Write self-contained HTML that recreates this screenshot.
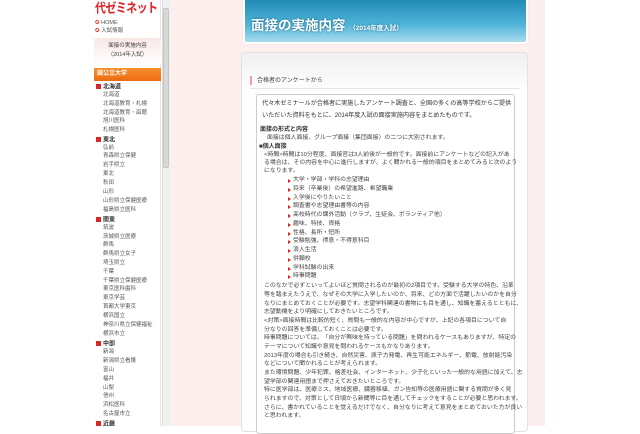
<!DOCTYPE html>
<html><head><meta charset="utf-8"><style>
*{margin:0;padding:0;box-sizing:border-box}
body{width:640px;height:426px;overflow:hidden;background:#fff;position:relative;font-family:"Liberation Sans","Noto Sans CJK JP",sans-serif;color:#333}
.a{position:absolute;white-space:nowrap;line-height:1}
#pink{position:absolute;left:170px;top:0;width:375px;height:426px;background:#fcefee}
#side{position:absolute;left:94px;top:0;width:67px;height:426px;background:#fff;border-right:1px solid #e4e4e4}
#sb{position:absolute;left:162px;top:0;width:8px;height:426px;background:#f0f0f0;border-left:1px solid #ddd}
#thumb{position:absolute;left:163px;top:8px;width:6px;height:160px;background:#d8d8d8;border:1px solid #c4c4c4;border-radius:2px}
.si{font-size:5.5px;color:#555;left:103px}
.sh{font-size:6px;color:#333;font-weight:bold;left:96px}
.sh:before{content:"";display:inline-block;width:5px;height:5px;background:#d8262a;margin-right:2px;vertical-align:-0.5px}
#hdr{position:absolute;left:243px;top:-4px;width:285px;height:48px;border-radius:4px;background:linear-gradient(#1f87b3,#4fb4d8 60%,#a8dcef);border:2px solid #fff;box-shadow:0 0 1px #ccc}
#panel{position:absolute;left:241px;top:52px;width:287px;height:380px;border-radius:4px;background:linear-gradient(#f0f0f0,#fff 40px);border:1px solid #e2e2e2}
#box{position:absolute;left:256px;top:94px;width:259px;height:340px;border-radius:3px;background:#fff;border:1px solid #ccc}
.t{font-size:5.9px;color:#444;left:264px}
.l{font-size:5.9px;color:#444;left:293px}
.l:before{content:"";position:absolute;left:-5px;top:1px;border-left:3px solid #d8262a;border-top:2px solid transparent;border-bottom:2px solid transparent}
</style></head><body>
<div id="pink"></div>
<div id="side"></div>
<div id="sb"></div><div id="thumb"></div>
<div class="a" style="left:95px;top:3px;font-size:11px;font-weight:bold;color:#e0242a;letter-spacing:-0.6px;transform:scaleY(1.2);transform-origin:left top">代ゼミネット</div>
<div class="a" style="left:95px;top:21px;font-size:5.5px;color:#555"><span style="color:#d8262a">✪</span> HOME</div>
<div class="a" style="left:95px;top:29px;font-size:5.5px;color:#555"><span style="color:#d8262a">✪</span> 入試情報</div>
<div class="a" style="left:94px;top:38px;width:67px;height:28px;background:linear-gradient(#f8e8e6,#fff);border-radius:3px"></div>
<div class="a" style="left:94px;top:44px;width:67px;text-align:center;font-size:5.5px;color:#444">面接の実施内容</div>
<div class="a" style="left:94px;top:53px;width:67px;text-align:center;font-size:5.5px;color:#444">（2014年入試）</div>
<div class="a" style="left:94px;top:68px;width:67px;height:13px;background:linear-gradient(#f4902e,#ee6a10);"></div>
<div class="a" style="left:97px;top:71px;font-size:6px;color:#fff;font-weight:bold">国公立大学</div>
<div class="a sh" style="top:84px">北海道</div>
<div class="a si" style="top:93px">北海道</div>
<div class="a si" style="top:102px">北海道教育・札幌</div>
<div class="a si" style="top:111px">北海道教育・函館</div>
<div class="a si" style="top:119px">旭川医科</div>
<div class="a si" style="top:128px">札幌医科</div>
<div class="a sh" style="top:137px">東北</div>
<div class="a si" style="top:146px">弘前</div>
<div class="a si" style="top:154px">青森県立保健</div>
<div class="a si" style="top:163px">岩手県立</div>
<div class="a si" style="top:172px">東北</div>
<div class="a si" style="top:181px">秋田</div>
<div class="a si" style="top:190px">山形</div>
<div class="a si" style="top:199px">山形県立保健医療</div>
<div class="a si" style="top:208px">福島県立医科</div>
<div class="a sh" style="top:217px">関東</div>
<div class="a si" style="top:226px">筑波</div>
<div class="a si" style="top:235px">茨城県立医療</div>
<div class="a si" style="top:243px">群馬</div>
<div class="a si" style="top:252px">群馬県立女子</div>
<div class="a si" style="top:261px">埼玉県立</div>
<div class="a si" style="top:270px">千葉</div>
<div class="a si" style="top:279px">千葉県立保健医療</div>
<div class="a si" style="top:287px">東京医科歯科</div>
<div class="a si" style="top:296px">東京学芸</div>
<div class="a si" style="top:305px">首都大学東京</div>
<div class="a si" style="top:314px">横浜国立</div>
<div class="a si" style="top:323px">神奈川県立保健福祉</div>
<div class="a si" style="top:332px">横浜市立</div>
<div class="a sh" style="top:341px">中部</div>
<div class="a si" style="top:350px">新潟</div>
<div class="a si" style="top:359px">新潟県立看護</div>
<div class="a si" style="top:368px">富山</div>
<div class="a si" style="top:377px">福井</div>
<div class="a si" style="top:386px">山梨</div>
<div class="a si" style="top:394px">信州</div>
<div class="a si" style="top:403px">浜松医科</div>
<div class="a si" style="top:412px">名古屋市立</div>
<div class="a sh" style="top:421px">近畿</div>

<div id="hdr"></div>
<div class="a" style="left:251px;top:19px;font-size:13.5px;font-weight:bold;color:#fff;text-shadow:0 0 2px #135e80">面接の実施内容 <span style="font-size:6.5px">（2014年度入試）</span></div>
<div id="panel"></div>
<div class="a" style="left:250px;top:76px;width:2px;height:9px;background:#f0a0a8"></div>
<div class="a" style="left:257px;top:78px;font-size:6px;color:#444">合格者のアンケートから</div>
<div class="a" style="left:250px;top:88px;width:270px;height:1px;background:#e6e6e6"></div>
<div id="box"></div>
<div class="a" style="left:262px;top:101px;font-size:6.2px;color:#333;letter-spacing:-0.1px">代々木ゼミナールが合格者に実施したアンケート調査と、全国の多くの高等学校からご提供</div>
<div class="a" style="left:262px;top:113px;font-size:6.2px;color:#333;letter-spacing:-0.1px">いただいた資料をもとに、2014年度入試の面接実施内容をまとめたものです。</div>
<div class="a" style="left:260px;top:127px;font-size:6px;font-weight:bold;color:#333">面接の形式と内容</div>
<div class="a t" style="top:136px;left:267px">面接は個人面接、グループ面接（集団面接）の二つに大別されます。</div>
<div class="a" style="left:259px;top:144px;font-size:6px;font-weight:bold;color:#333">■個人面接</div>
<div class="a t" style="top:153px">&lt;時間&gt;時間は10分程度、面接官は3人前後が一般的です。面接前にアンケートなどの記入があ</div>
<div class="a t" style="top:161px">る場合は、その内容を中心に進行しますが、よく聞かれる一般的項目をまとめてみると次のよう</div>
<div class="a t" style="top:169px">になります。</div>
<div class="a l" style="top:178px">大学・学部・学科の志望理由</div>
<div class="a l" style="top:187px">将来（卒業後）の希望進路、希望職業</div>
<div class="a l" style="top:196px">入学後にやりたいこと</div>
<div class="a l" style="top:204px">調査書や志望理由書等の内容</div>
<div class="a l" style="top:213px">高校時代の課外活動（クラブ、生徒会、ボランティア他）</div>
<div class="a l" style="top:222px">趣味、特技、資格</div>
<div class="a l" style="top:231px">性格、長所・短所</div>
<div class="a l" style="top:239px">受験勉強、得意・不得意科目</div>
<div class="a l" style="top:248px">浪人生活</div>
<div class="a l" style="top:257px">併願校</div>
<div class="a l" style="top:266px">学科試験の出来</div>
<div class="a l" style="top:274px">時事問題</div>
<div class="a t" style="top:284px">このなかで必ずといってよいほど質問されるのが最初の2項目です。受験する大学の特色、沿革</div>
<div class="a t" style="top:293px">等を踏まえたうえで、なぜその大学に入学したいのか、将来、どの方面で活躍したいのかを自分</div>
<div class="a t" style="top:302px">なりにまとめておくことが必要です。志望学科関連の書物にも目を通し、知識を蓄えるとともに、</div>
<div class="a t" style="top:310px">志望動機をより明確にしておきたいところです。</div>
<div class="a t" style="top:319px">&lt;対策&gt;面接時間は比較的短く、質問も一般的な内容が中心ですが、上記の各項目について自</div>
<div class="a t" style="top:328px">分なりの回答を準備しておくことは必要です。</div>
<div class="a t" style="top:336px">時事問題については、「自分が興味を持っている問題」を問われるケースもありますが、特定の</div>
<div class="a t" style="top:345px">テーマについて知識や意見を問われるケースもかなりあります。</div>
<div class="a t" style="top:354px">2013年度の場合も引き続き、自然災害、原子力発電、再生可能エネルギー、節電、放射能汚染</div>
<div class="a t" style="top:362px">などについて聞かれることが考えられます。</div>
<div class="a t" style="top:371px">また環境問題、少年犯罪、格差社会、インターネット、少子化といった一般的な用語に加えて、志</div>
<div class="a t" style="top:380px">望学部の関連用語まで押さえておきたいところです。</div>
<div class="a t" style="top:388px">特に医学部は、医療ミス、地域医療、臓器移植、ガン告知等の医療用語に関する質問が多く見</div>
<div class="a t" style="top:397px">られますので、対策として日頃から新聞等に目を通してチェックをすることが必要と思われます。</div>
<div class="a t" style="top:406px">さらに、書かれていることを覚えるだけでなく、自分なりに考えて意見をまとめておいた方が良い</div>
<div class="a t" style="top:414px">と思われます。</div>
</body></html>
